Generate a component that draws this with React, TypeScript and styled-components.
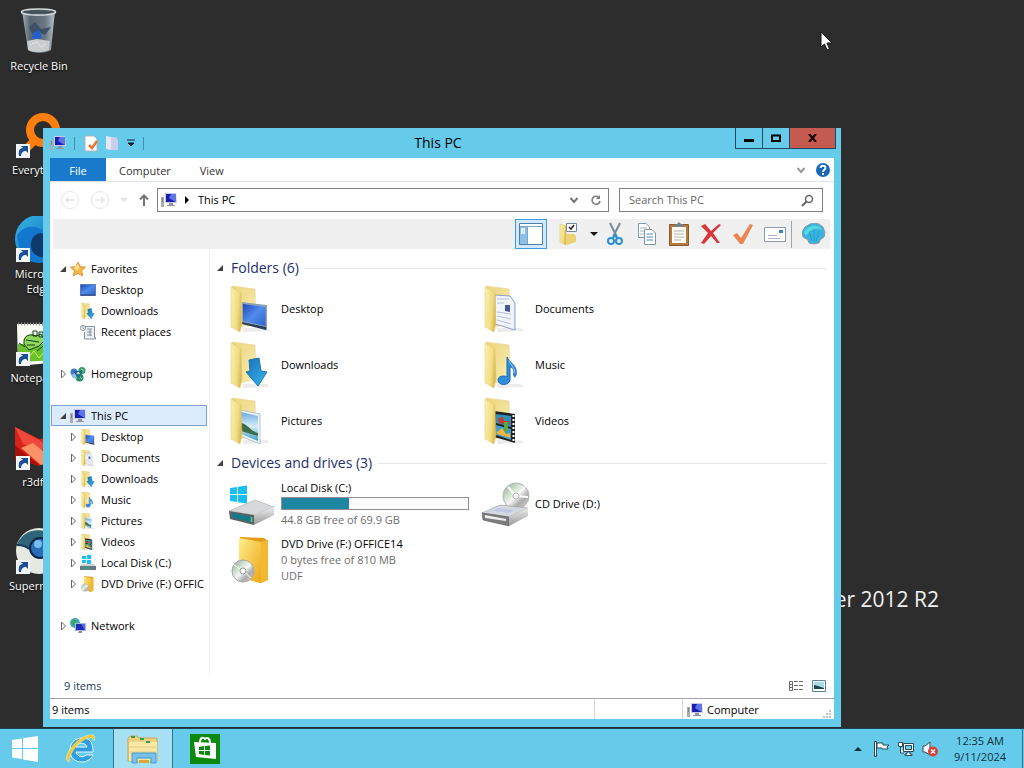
import React from 'react';
import styled, { createGlobalStyle } from 'styled-components';

const GlobalStyle = createGlobalStyle`
  * { box-sizing: border-box; }
  body { margin: 0; background: #2d2d2d; }
  body, button, input {
    font-family: "Open Sans", "Noto Sans", sans-serif;
    font-size: 11px;
    line-height: 16px;
    color: #000;
  }
  button { border: 0; padding: 0; background: none; }
  svg { display: block; flex: none; }
`;

/* ---------- desktop ---------- */

const Screen = styled.div`
  display: flex;
  flex-direction: column;
  height: 100vh;
  overflow: hidden;
`;

const Desktop = styled.main`
  position: relative;
  flex: 1;
  min-height: 0;
  background: #2d2d2d;
`;

const Shortcuts = styled.div`
  display: grid;
  grid-auto-rows: 104px;
  width: 78px;
  padding-top: 8px;
`;

const Shortcut = styled.button`
  display: flex;
  flex-direction: column;
  align-items: center;
  gap: 2px;
  padding: 0 8px;
  color: #fff;
  line-height: 15px;
  text-shadow: 0 1px 2px #000;
`;

const Brand = styled.p`
  position: absolute;
  right: 85px;
  bottom: 114px;
  margin: 0;
  font-size: 21px;
  line-height: 30px;
  color: #f0f0f0;
`;

const Pointer = styled.div`
  position: absolute;
  left: 820px;
  top: 31px;
`;

/* ---------- explorer window ---------- */

const Window = styled.section`
  position: absolute;
  inset: 128px 183px 1px 43px;
  display: flex;
  flex-direction: column;
  padding: 0 7px 8px;
  background: #66cbea;
`;

const TitleBar = styled.header`
  display: grid;
  grid-template-columns: 1fr auto 1fr;
  height: 30px;
`;

const QuickAccess = styled.div`
  display: flex;
  align-items: center;
  gap: 8px;
`;

const QuickDivider = styled.span`
  width: 1px;
  height: 13px;
  background: #3f8fb0;
`;

const Title = styled.h1`
  margin: 0;
  padding-right: 8px;
  font-size: 14px;
  line-height: 30px;
  font-weight: 400;
`;

const Controls = styled.div`
  display: flex;
  justify-content: flex-end;
  margin-right: -2px;
`;

const Control = styled.button<{ $close?: boolean }>`
  display: grid;
  place-items: center;
  width: ${p => (p.$close ? 47 : 28)}px;
  height: 21px;
  border: 1px solid #1c4a60;
  border-top: 0;
  margin-left: -1px;
  background: ${p => (p.$close ? '#c45a50' : 'transparent')};
`;

const Frame = styled.div`
  flex: 1;
  min-height: 0;
  display: flex;
  flex-direction: column;
  background: #fff;
`;

const Tabs = styled.nav`
  display: flex;
  align-items: center;
  height: 24px;
  border-bottom: 1px solid #dfe3e6;
`;

const Tab = styled.button<{ $file?: boolean }>`
  align-self: stretch;
  min-width: 56px;
  padding: 2px 13px 0;
  background: ${p => (p.$file ? '#1979ca' : 'transparent')};
  color: ${p => (p.$file ? '#fff' : '#333')};
`;

const Spacer = styled.span`
  flex: 1;
`;

const IconButton = styled.button<{ $w?: number }>`
  display: grid;
  place-items: center;
  width: ${p => p.$w ?? 22}px;
  height: 22px;
`;

const NavBar = styled.div`
  display: flex;
  align-items: center;
  height: 37px;
  padding: 0 11px 1px 8px;
`;

const Address = styled.div`
  display: flex;
  align-items: center;
  flex: 1;
  height: 24px;
  padding: 0 1px 0 3px;
  border: 1px solid #7d8286;
`;

const Crumb = styled.button`
  padding: 0 8px;
`;

const Search = styled.label`
  display: flex;
  align-items: center;
  width: 204px;
  height: 24px;
  margin-left: 10px;
  padding: 0 8px 0 9px;
  border: 1px solid #7d8286;
`;

const SearchInput = styled.input`
  flex: 1;
  min-width: 0;
  padding: 0;
  border: 0;
  outline: 0;
  background: none;
  &::placeholder { color: #666; opacity: 1; }
`;

const ToolBar = styled.div`
  display: flex;
  align-items: center;
  justify-content: flex-end;
  height: 30px;
  margin: 0 4px 0 3px;
  background: #f0f0f0;
`;

const Tool = styled.button<{ $w?: number; $on?: boolean }>`
  display: grid;
  place-items: center;
  width: ${p => p.$w ?? 32}px;
  height: 30px;
  border: 1px solid ${p => (p.$on ? '#3d9be0' : 'transparent')};
  background: ${p => (p.$on ? '#d3e8f8' : 'transparent')};
`;

const ToolDivider = styled.span`
  width: 1px;
  height: 27px;
  margin-right: 6px;
  background: #a5a5a5;
`;

const Body = styled.div`
  display: flex;
  flex: 1;
  min-height: 0;
`;

const Tree = styled.nav`
  flex: none;
  width: 160px;
  padding: 9px 2px 0 1px;
  border-right: 1px solid #f3f3f3;
`;

const TreeGroup = styled.div`
  display: flex;
  flex-direction: column;
  margin-bottom: 21px;
`;

const TreeItem = styled.button<{ $nested?: boolean; $on?: boolean }>`
  display: flex;
  align-items: center;
  height: 21px;
  padding-left: ${p => (p.$nested ? 18 : 8)}px;
  border: solid ${p => (p.$on ? '#7da2ce' : 'transparent')};
  border-width: 1px ${p => (p.$on ? 1 : 0)}px 1px 1px;
  background: ${p => (p.$on ? '#dcebfc' : 'transparent')};
  white-space: nowrap;
`;

const TreeArrow = styled.span`
  flex: none;
  width: 10px;
`;

const TreeLabel = styled.span`
  margin-left: 5px;
`;

const Content = styled.div`
  flex: 1;
  min-width: 0;
  padding: 9px 7px 0;
`;

const Group = styled.section`
  margin-bottom: 4px;
`;

const GroupHead = styled.h2`
  display: flex;
  align-items: center;
  gap: 6px;
  height: 20px;
  margin: 0 0 3px;
  font-size: 14px;
  line-height: 20px;
  font-weight: 400;
  color: #1e2f6b;
  &::after {
    content: '';
    flex: 1;
    height: 1px;
    background: #e4e6ea;
  }
`;

const Items = styled.div`
  display: grid;
  grid-template-columns: repeat(auto-fill, 254px);
  grid-auto-rows: 56px;
  padding-left: 11px;
`;

const Item = styled.button`
  display: flex;
  align-items: center;
  gap: 5px;
  text-align: left;
`;

const ItemText = styled.span`
  display: flex;
  flex-direction: column;
  width: 188px;
`;

const Note = styled.span`
  color: #6d6d6d;
`;

const Usage = styled.span`
  height: 13px;
  margin: 1px 0 2px;
  border: 1px solid #8f8f8f;
  background: #fbfbfb;
`;

const UsageFill = styled.span`
  display: block;
  height: 100%;
  background: #1d87a3;
`;

const Details = styled.div`
  display: flex;
  align-items: center;
  gap: 8px;
  height: 23px;
  padding: 0 8px 2px 14px;
  color: #1e395b;
`;

const StatusBar = styled.footer`
  display: flex;
  align-items: stretch;
  height: 21px;
  border-top: 1px solid #a5a5a5;
`;

const StatusCell = styled.div<{ $w?: number }>`
  display: flex;
  align-items: center;
  gap: 4px;
  flex: ${p => (p.$w ? 'none' : '1')};
  width: ${p => (p.$w ? p.$w + 'px' : 'auto')};
  padding: 2px 2px 0;
  & + & { border-left: 1px solid #d5d5d5; padding-left: 4px; }
`;

/* ---------- task bar ---------- */

const TaskBar = styled.footer`
  display: flex;
  flex: none;
  height: 40px;
  border-top: 1px solid #17465a;
  background: #66cbea;
`;

const TaskButton = styled.button<{ $w?: number; $on?: boolean }>`
  display: grid;
  place-items: center;
  width: ${p => p.$w ?? 60}px;
  margin-right: 2px;
  border: solid #2d7693;
  border-width: 0 ${p => (p.$on ? 1 : 0)}px;
  background: ${p => (p.$on ? '#a6e0f2' : 'transparent')};
`;

const Tray = styled.div`
  display: flex;
  align-items: center;
`;

const TrayButton = styled.button`
  display: grid;
  place-items: center;
  width: 24px;
  height: 32px;
`;

const Clock = styled.button`
  width: 76px;
  margin-right: 4px;
  color: #0b2f40;
  text-align: center;
`;

const ShowDesktop = styled.button`
  align-self: stretch;
  width: 2px;
  border-left: 1px solid #2d7693;
`;

/* ---------- drawings ---------- */

const SharedPaints = () => (
  <svg width="0" height="0" style={{ position: 'absolute' }} aria-hidden="true">
    <defs>
      <linearGradient id="flap" x1="0" y1="0" x2="1" y2="0.3">
        <stop offset="0" stopColor="#fbf1ae" />
        <stop offset="0.7" stopColor="#f0dc84" />
        <stop offset="1" stopColor="#dcbc55" />
      </linearGradient>
      <linearGradient id="folderBack" x1="0" y1="0" x2="1" y2="1">
        <stop offset="0" stopColor="#ecd47c" />
        <stop offset="1" stopColor="#f9eeb4" />
      </linearGradient>
      <linearGradient id="screen" x1="0" y1="0" x2="1" y2="1">
        <stop offset="0" stopColor="#2448b8" />
        <stop offset="0.5" stopColor="#4f8cec" />
        <stop offset="1" stopColor="#2f62cc" />
      </linearGradient>
      <linearGradient id="arrowBlue" x1="0" y1="0" x2="1" y2="1">
        <stop offset="0" stopColor="#1670b8" />
        <stop offset="1" stopColor="#3cb4ee" />
      </linearGradient>
      <linearGradient id="metal" x1="0" y1="0" x2="0" y2="1">
        <stop offset="0" stopColor="#ededed" />
        <stop offset="1" stopColor="#999" />
      </linearGradient>
      <linearGradient id="disc" x1="0" y1="0" x2="1" y2="1">
        <stop offset="0" stopColor="#9a9a9a" />
        <stop offset="0.3" stopColor="#c6dcc6" />
        <stop offset="0.5" stopColor="#f6f6f6" />
        <stop offset="0.7" stopColor="#adadad" />
        <stop offset="1" stopColor="#d8d8d8" />
      </linearGradient>
      <linearGradient id="gold" x1="0" y1="0" x2="1" y2="1">
        <stop offset="0" stopColor="#fdee8c" />
        <stop offset="1" stopColor="#eda716" />
      </linearGradient>
      <linearGradient id="edge" x1="0" y1="0" x2="1" y2="1">
        <stop offset="0" stopColor="#37b6e4" />
        <stop offset="1" stopColor="#0b5bb5" />
      </linearGradient>
      <linearGradient id="bin" x1="0" y1="0" x2="1" y2="0">
        <stop offset="0" stopColor="#a4b0b8" />
        <stop offset="0.25" stopColor="#566570" />
        <stop offset="0.7" stopColor="#6a7884" />
        <stop offset="1" stopColor="#b7c0c6" />
      </linearGradient>
      <linearGradient id="sky" x1="0" y1="0" x2="0" y2="1">
        <stop offset="0" stopColor="#6ba9e0" />
        <stop offset="0.5" stopColor="#d9eef7" />
        <stop offset="1" stopColor="#3a9bc2" />
      </linearGradient>
    </defs>
  </svg>
);

type FolderKind = 'desktop' | 'documents' | 'downloads' | 'music' | 'pictures' | 'videos';

const overlays: Record<FolderKind, React.ReactNode> = {
  desktop: (
    <>
      <path d="M14 17L39 20V45L14 38Z" fill="#8fa0b6" />
      <path d="M15 19L37.500 22V41L15 36Z" fill="url(#screen)" />
      <path d="M14 37L38 42V45L14 39Z" fill="#2b3c56" />
    </>
  ),
  documents: (
    <>
      <path d="M13 10L28 11 33 18V45L13 39Z" fill="#f1f4fb" stroke="#8f9fc6" />
      <path d="M15 14H27M15 18H22M15 27L29 29M15 31L29 34M15 35L29 39" stroke="#b4bfdc" />
      <path d="M23 20H28V27L23 26Z" fill="#44598f" />
    </>
  ),
  downloads: <path d="M21 19L31 17 33 30 39 31 30 45 18 31 22 30Z" fill="url(#arrowBlue)" stroke="#1f74ae" />,
  music: (
    <>
      <path d="M25 16C27 22 36 24 34 34C33 38 31 35 32 31C32 27 29 26 28 26V39C27 45 16 45 16 39C16 35 22 34 25 36Z" fill="#2f8fdc" stroke="#1b69b4" />
      <path d="M27 19C28 24 33 26 33 32" stroke="#8acbf4" fill="none" />
    </>
  ),
  pictures: (
    <>
      <path d="M12 13L32 17V47L12 39Z" fill="#edf3f7" stroke="#b6c4cc" />
      <path d="M13 15L30 19V44L13 37Z" fill="url(#sky)" />
      <path d="M13 26C20 27 22 34 30 36V39L13 34Z" fill="#3d6c4a" />
    </>
  ),
  videos: (
    <>
      <path d="M12 14L33 17V46L12 40Z" fill="#222" />
      <path d="M14 17L29 19V30L14 26Z" fill="#2f8fb8" />
      <path d="M14 28L29 32V43L14 38Z" fill="#3c9ccf" />
      <path d="M16 21L21 20 22 24 28 24 26 28 17 26Z" fill="#c23c30" />
      <path d="M15 35L20 31 24 37 28 36V41L15 37Z" fill="#f0b43a" />
      <path d="M22 25H26V34H22Z" fill="#5ea63d" />
      <path d="M31.500 18V45" stroke="#fff" strokeWidth="2" strokeDasharray="2 2" />
    </>
  ),
};

const FolderIcon = ({ kind, size = 48 }: { kind: FolderKind; size?: number }) => (
  <svg width={size} height={size} viewBox={size < 20 ? '1 2 41 44' : '0 0 48 48'}>
    <path d="M14 43L39 43 42 46 16 47Z" fill="#ececec" />
    <path d="M4 1L27 4 28 38 12 42Z" fill="url(#folderBack)" stroke="#e5cf86" strokeWidth="0.500" />
    {overlays[kind]}
    <path d="M3 2L13 8 14 38 12 47 3 42Z" fill="url(#flap)" stroke="#e0c66c" strokeWidth="0.500" />
  </svg>
);

const PcIcon = ({ size = 16 }: { size?: number }) => (
  <svg width={size} height={size} viewBox="0 0 16 16">
    <path d="M0 5H3V15H0Z" fill="#a9adac" />
    <path d="M1 7H2M1 9H2" stroke="#557" />
    <path d="M4 1L15 1 16 11 4 11Z" fill="#c3cbe6" />
    <path d="M5 2H14.500V10H5Z" fill="#1a1fae" />
    <path d="M10 2H14.500V10L8 6Z" fill="#5c74e6" />
    <path d="M8 11H12V13H14V14H6V13H8Z" fill="#8f959d" />
  </svg>
);

const DiskIcon = ({ size = 48 }: { size?: number }) =>
  size < 20 ? (
    <svg width={size} height={size} viewBox="0 0 16 16">
      <path d="M2 1H6V4H2ZM7 0H11V4H7ZM2 5H6V8H2ZM7 5H11V9H7Z" fill="#18bff0" />
      <path d="M2 9H14L16 11H0Z" fill="#cfd3d5" />
      <path d="M0 11H16V15H0Z" fill="#67777c" />
      <path d="M2 13H10" stroke="#25b3a8" />
    </svg>
  ) : (
    <svg width={size} height={size} viewBox="0 0 48 48">
      <path d="M2 8L9 7V14H2ZM10 6.800L19 5.500V14H10ZM2 15H9V22L2 21ZM10 15H19V23.500L10 22.300Z" fill="#18bff0" />
      <path d="M1 31L27 20 46 27 26 35Z" fill="#d6d8d9" stroke="#9ea1a3" strokeWidth="0.500" />
      <path d="M1 31L26 35V45L2 39Z" fill="#5c6264" />
      <path d="M4 33L22 36.500V42L4 37.500Z" fill="#127b88" />
      <path d="M26 35L46 27V35L26 45Z" fill="url(#metal)" />
      <path d="M23.500 37V42" stroke="#2fe0a0" strokeWidth="1.500" />
    </svg>
  );

const CdDriveIcon = () => (
  <svg width="48" height="48" viewBox="0 0 48 48">
    <circle cx="34" cy="16" r="13" fill="url(#disc)" stroke="#b4b4b4" />
    <path d="M34 16L43 7M34 16L46 17M34 16L26 7" stroke="#fff" strokeWidth="2" />
    <circle cx="34" cy="16" r="3" fill="#f6f6f6" stroke="#b9b9b9" />
    <path d="M0 33L18 25 46 28 27 37Z" fill="#d6d8e0" stroke="#8f8f8f" strokeWidth="0.500" />
    <path d="M16 28L32 30 27 33 11 31Z" fill="#c0cae4" />
    <path d="M0 33L27 37V46L1 40Z" fill="#7c7c7c" stroke="#4c4c4c" strokeWidth="0.500" />
    <path d="M3 35L24 39V41L3 38Z" fill="#eee" />
    <path d="M27 37L46 28V36L27 46Z" fill="url(#metal)" />
  </svg>
);

const DvdIcon = ({ size = 48 }: { size?: number }) => (
  <svg width={size} height={size} viewBox="0 0 48 48">
    <path d="M12 1L36 2 40 5V44L33 47 12 41Z" fill="#e29d18" />
    <path d="M11 2L33 6V47L11 42Z" fill="url(#gold)" />
    <path d="M33 6L40 4V43L33 47Z" fill="#f2b832" />
    <circle cx="15" cy="35" r="11" fill="url(#disc)" stroke="#a8a8a8" />
    <path d="M15 35L6 29M15 35L23 42M15 35L23 29" stroke="#fff" />
    <circle cx="15" cy="35" r="3" fill="#fff" stroke="#999" />
  </svg>
);

const StarIcon = () => (
  <svg width="16" height="16" viewBox="0 0 16 16">
    <path d="M8 1L10.200 5.600 15.500 6.200 11.600 9.700 12.800 15 8 12.300 3.200 15 4.400 9.700 0.500 6.200 5.800 5.600Z" fill="#fbb744" stroke="#d9822b" strokeWidth="0.800" />
    <path d="M8 3L9.300 6.600 8 10 4 7Z" fill="#fde28f" />
  </svg>
);

const ScreenIcon = () => (
  <svg width="16" height="16" viewBox="0 0 16 16">
    <path d="M0 2H16V14H0Z" fill="#5a7eb8" />
    <path d="M1 3H15V12H1Z" fill="url(#screen)" />
    <path d="M1 13H15" stroke="#1d3a78" />
  </svg>
);

const RecentIcon = () => (
  <svg width="16" height="16" viewBox="0 0 16 16" fill="none" stroke="#84909c">
    <path d="M4.500 2.500H14.500V13.500H15.500V15H4.500V8" fill="#eef1f4" />
    <circle cx="3" cy="4" r="2.500" fill="#fff" />
    <path d="M3 2.500V4.500H4M7 5H12M7 8H12M7 11H12M10 5V12" />
  </svg>
);

const HomegroupIcon = () => (
  <svg width="16" height="16" viewBox="0 0 16 16">
    <circle cx="4" cy="6" r="3.500" fill="#3f79c8" />
    <circle cx="12" cy="4.500" r="3.500" fill="#36a06e" />
    <circle cx="9.500" cy="11.500" r="4" fill="#2f8c6c" />
    <path d="M1 9L5 7 7 13 3 12Z" fill="#8abde8" />
    <path d="M11 3L14 5M9 10L12 13" stroke="#9be0c4" />
    <path d="M4 6L12 5 9 11Z" fill="none" stroke="#204f80" />
  </svg>
);

const NetworkIcon = () => (
  <svg width="16" height="16" viewBox="0 0 16 16">
    <circle cx="5" cy="5" r="5" fill="#3fa3d8" />
    <path d="M1 4C3 1 6 1 7 3L5 6 7 8C5 10 2 8 1 4Z" fill="#3faa55" />
    <path d="M5 5H16V13H5Z" fill="#a8b7dd" />
    <path d="M6 6H15V12H6Z" fill="#1f2cb6" />
    <path d="M11 6H15V12Z" fill="#5271df" />
    <path d="M9 13H12V15H8" fill="#8a8f99" />
  </svg>
);

const Twisty = ({ open }: { open?: boolean }) =>
  open ? (
    <svg width="8" height="8" viewBox="0 0 8 8"><path d="M6 1V7H0Z" fill="#404040" /></svg>
  ) : (
    <svg width="8" height="10" viewBox="0 0 8 10"><path d="M1.500 1L5.500 5 1.500 9Z" fill="#fff" stroke="#666" /></svg>
  );

const LinkBadge = () => (
  <>
    <path d="M1 32H15V46H1Z" fill="#f2f6fa" />
    <path d="M4 44C3 38 5 36 8 36L6 34H13V41L11 39C8 39 6 41 6 44Z" fill="#1c4f93" />
  </>
);

const RecycleIcon = () => (
  <svg width="48" height="48" viewBox="0 0 48 48">
    <path d="M7 3L40 3 36 42C30 46 18 46 13 42Z" fill="url(#bin)" />
    <ellipse cx="23.500" cy="4" rx="17" ry="3" fill="#48525a" stroke="#d5dce0" strokeWidth="1.500" />
    <path d="M14 19L20 14 26 21 36 19 30 27 24 24 18 27Z" fill="#3c5168" />
    <path d="M18 25L24 22 27 29 23 32 17 30Z" fill="#2360cf" />
    <path d="M12 33L22 31 35 33 34 42C28 45 18 45 13 42Z" fill="#c9cccd" />
    <path d="M15 37L22 34 26 39 31 36" stroke="#e6e6e6" fill="none" />
  </svg>
);

const EverythingIcon = () => (
  <svg width="48" height="48" viewBox="0 0 48 48">
    <circle cx="28" cy="18" r="13" fill="none" stroke="#ff7e0e" strokeWidth="8" />
    <path d="M20 28L10 38" stroke="#ff7e0e" strokeWidth="8" />
    <LinkBadge />
  </svg>
);

const EdgeIcon = () => (
  <svg width="48" height="48" viewBox="0 0 48 48">
    <circle cx="24" cy="23" r="24" fill="url(#edge)" />
    <path d="M2 20C8 8 22 9 30 16C20 17 14 26 18 36C21 43 28 45 34 44C20 51 4 42 2 20Z" fill="#1277cf" />
    <path d="M16 31C15 22 20 16 30 17C26 24 28 33 38 33C34 46 17 42 16 31Z" fill="#0f3a6c" />
    <LinkBadge />
  </svg>
);

const NotepadIcon = () => (
  <svg width="48" height="48" viewBox="0 0 48 48">
    <path d="M2 4H44V42L3 46Z" fill="#fbfcf5" />
    <path d="M3 24H44V40L3 42Z" fill="#6cc22a" />
    <path d="M3 4H44" stroke="#999" strokeWidth="3" strokeDasharray="1 2" />
    <path d="M9 24C8 16 14 13 21 16L26 14 30 20 24 26 14 30Z" fill="#8ed65c" stroke="#163d10" />
    <path d="M11 20L24 22M12 25L20 25M18 11H22V16H18ZM24 12H28V17H24ZM4 23L10 27M22 31L32 23" stroke="#163d10" fill="none" />
    <path d="M5 40L9 32 13 38 19 31 24 38 31 30" stroke="#c9ee72" fill="none" />
    <LinkBadge />
  </svg>
);

const FoxIcon = () => (
  <svg width="48" height="48" viewBox="0 0 48 48">
    <path d="M0 3L24 15 46 12 40 32 24 42 0 34Z" fill="#d92218" />
    <path d="M0 3L26 17 34 28 8 20Z" fill="#f0483a" />
    <path d="M6 24L18 19 40 37 26 41Z" fill="#ff9169" />
    <path d="M0 21L15 34 26 42 0 36Z" fill="#a80f0d" />
    <LinkBadge />
  </svg>
);

const SupermiumIcon = () => (
  <svg width="48" height="48" viewBox="0 0 48 48">
    <circle cx="24" cy="23" r="23" fill="#e6e9e0" />
    <path d="M2 17C7 3 25 -4 42 10L34 20 24 12 13 21C9 18 5 17 2 17Z" fill="#2d6478" />
    <path d="M2 17C7 17 11 18 14 21" stroke="#163d60" strokeWidth="2" fill="none" />
    <circle cx="25" cy="20" r="10" fill="#2a6cb6" stroke="#0c2746" strokeWidth="2" />
    <circle cx="23" cy="16" r="4" fill="#77bdf0" />
    <LinkBadge />
  </svg>
);

const PointerIcon = () => (
  <svg width="14" height="20" viewBox="0 0 14 20">
    <path d="M1 1V16L4.500 13 7 19 9.500 18 7 12H12Z" fill="#fff" stroke="#111" />
  </svg>
);

const RoundArrow = ({ back }: { back?: boolean }) => (
  <svg width="20" height="20" viewBox="0 0 20 20" fill="none" stroke="#e6e6e6">
    <circle cx="10" cy="10" r="8.500" />
    <path d={back ? 'M15 10H6M9 7L6 10 9 13' : 'M5 10H14M11 7L14 10 11 13'} strokeWidth="1.500" />
  </svg>
);

const Chevron = ({ color = '#777' }: { color?: string }) => (
  <svg width="10" height="8" viewBox="0 0 10 8"><path d="M1.500 2L5 6 8.500 2" fill="none" stroke={color} strokeWidth="2" /></svg>
);

const Caret = ({ color = '#111' }: { color?: string }) => (
  <svg width="8" height="5" viewBox="0 0 8 5"><path d="M0 0H8L4 4Z" fill={color} /></svg>
);

/* ---------- data ---------- */

const shortcuts: [string, React.ReactNode][] = [
  ['Recycle Bin', <RecycleIcon />],
  ['Everything', <EverythingIcon />],
  ['Microsoft Edge', <EdgeIcon />],
  ['Notepad++', <NotepadIcon />],
  ['r3dfox', <FoxIcon />],
  ['Supermium', <SupermiumIcon />],
];

type Node = { label: string; icon: React.ReactNode; leaf?: boolean };
type Branch = Node & { open?: boolean; on?: boolean; children?: Node[] };

const small = (kind: FolderKind) => <FolderIcon kind={kind} size={16} />;

const tree: Branch[] = [
  {
    label: 'Favorites', icon: <StarIcon />, open: true,
    children: [
      { label: 'Desktop', icon: <ScreenIcon />, leaf: true },
      { label: 'Downloads', icon: small('downloads'), leaf: true },
      { label: 'Recent places', icon: <RecentIcon />, leaf: true },
    ],
  },
  { label: 'Homegroup', icon: <HomegroupIcon /> },
  {
    label: 'This PC', icon: <PcIcon />, open: true, on: true,
    children: [
      { label: 'Desktop', icon: small('desktop') },
      { label: 'Documents', icon: small('documents') },
      { label: 'Downloads', icon: small('downloads') },
      { label: 'Music', icon: small('music') },
      { label: 'Pictures', icon: small('pictures') },
      { label: 'Videos', icon: small('videos') },
      { label: 'Local Disk (C:)', icon: <DiskIcon size={16} /> },
      { label: 'DVD Drive (F:) OFFIC', icon: <DvdIcon size={16} /> },
    ],
  },
  { label: 'Network', icon: <NetworkIcon /> },
];

const folders: [string, FolderKind][] = [
  ['Desktop', 'desktop'],
  ['Documents', 'documents'],
  ['Downloads', 'downloads'],
  ['Music', 'music'],
  ['Pictures', 'pictures'],
  ['Videos', 'videos'],
];

const diskUsed = 36;

/* ---------- page ---------- */

const ExplorerToolBar = () => (
  <ToolBar>
    <Tool $on aria-label="Navigation pane">
      <svg width="24" height="22" viewBox="0 0 24 22">
        <path d="M0.500 0.500H23.500V21.500H0.500Z" fill="#fff" stroke="#4a7fae" />
        <path d="M1 3.500H23M8.500 4V21" stroke="#7ea4c6" />
        <path d="M1 4H8V21H1Z" fill="#8cc0e6" />
        <path d="M2 5H6V11H2Z" fill="#d9ecf8" />
      </svg>
    </Tool>
    <Tool $w={42} aria-label="Folder options">
      <svg width="24" height="24" viewBox="0 0 24 24">
        <path d="M4 2L10 4V23L4 20Z" fill="url(#flap)" stroke="#d8bb5a" strokeWidth="0.500" />
        <path d="M10 12H18L20 14V20L10 23Z" fill="#ecd271" />
        <path d="M10.500 1.500H20.500V9.500H10.500Z" fill="#fff" stroke="#78879a" />
        <path d="M13 5L15 7 18 3" fill="none" stroke="#223" strokeWidth="1.500" />
      </svg>
    </Tool>
    <Tool $w={10} aria-label="More folder options"><Caret /></Tool>
    <Tool $w={32} aria-label="Cut">
      <svg width="16" height="24" viewBox="0 0 16 24" fill="none">
        <path d="M3 1L10 15M13 1L6 15" stroke="#7a8a96" strokeWidth="2" />
        <circle cx="4" cy="19" r="3" stroke="#2b8fd4" strokeWidth="2" />
        <circle cx="12" cy="19" r="3" stroke="#2b8fd4" strokeWidth="2" />
        <path d="M6 16L8 13 10 16" stroke="#2b8fd4" strokeWidth="2" />
      </svg>
    </Tool>
    <Tool aria-label="Copy">
      <svg width="20" height="24" viewBox="0 0 20 24" fill="#fff" stroke="#8496aa">
        <path d="M1.500 1.500H9L12.500 5V15.500H1.500Z" />
        <path d="M3 6H10M3 9H8M3 12H8" stroke="#a9b6c4" />
        <path d="M7.500 7.500H15L18.500 11V22.500H7.500Z" />
        <path d="M9.500 12H16M9.500 15H16M9.500 18H16" stroke="#4b8ac6" />
      </svg>
    </Tool>
    <Tool aria-label="Paste">
      <svg width="20" height="24" viewBox="0 0 20 24">
        <path d="M0.500 2.500H19.500V23.500H0.500Z" fill="#b47a3c" stroke="#8a5a28" />
        <path d="M3 5H17V21H3Z" fill="#fbfaf2" />
        <path d="M5 9H15M5 12H15M5 15H15M5 18H12" stroke="#b3b8b8" />
        <path d="M6 2H8L10 0 12 2H14V5H6Z" fill="#78848c" />
      </svg>
    </Tool>
    <Tool aria-label="Delete">
      <svg width="22" height="22" viewBox="0 0 22 22">
        <path d="M1 3L5 1 11 8 19 1 21 2 13 10 20 20 17 20 11 13 4 21 1 20 8 10Z" fill="#d9363a" />
      </svg>
    </Tool>
    <Tool aria-label="Properties">
      <svg width="22" height="22" viewBox="0 0 22 22">
        <path d="M1 12L5 10 9 15 18 1 21 2 11 21 8 21Z" fill="#ee8450" />
      </svg>
    </Tool>
    <Tool aria-label="Send">
      <svg width="22" height="15" viewBox="0 0 22 15">
        <path d="M0.500 0.500H21.500V14.500H0.500Z" fill="#fff" stroke="#8c9bab" />
        <path d="M15 3H19V6H15Z" fill="#3f80cd" />
        <path d="M4 8.500H13M4 11.500H16" stroke="#aab5c1" />
      </svg>
    </Tool>
    <ToolDivider />
    <Tool aria-label="Classic Shell settings">
      <svg width="24" height="22" viewBox="0 0 24 22">
        <path d="M7 20L6 17 1 14 0 9 3 4 8 1 12 0 17 1 21 4 23 9 22 14 18 17 17 20 12 21Z" fill="#38b5df" stroke="#9a97a0" />
        <path d="M12 19V6M10 18L7 8M14 18L17 8" stroke="#2a9bd0" />
        <path d="M2 9C7 1 16 1 21 7C14 4 8 6 4 13Z" fill="#53dce0" />
      </svg>
    </Tool>
  </ToolBar>
);

export default function App() {
  return (
    <Screen>
      <GlobalStyle />
      <SharedPaints />
      <Desktop>
        <Shortcuts>
          {shortcuts.map(([label, icon]) => (
            <Shortcut key={label}>{icon}<span>{label}</span></Shortcut>
          ))}
        </Shortcuts>
        <Brand>Windows Server 2012 R2</Brand>

        <Window aria-label="This PC">
          <TitleBar>
            <QuickAccess>
              <PcIcon />
              <QuickDivider />
              <svg width="15" height="17" viewBox="0 0 15 17">
                <path d="M2 1H11L14 4V16H2Z" fill="#fff" stroke="#a9b4bc" />
                <path d="M6 10L9 13 14 6" stroke="#ea7436" strokeWidth="2.500" fill="none" />
              </svg>
              <svg width="13" height="16" viewBox="0 0 13 16">
                <path d="M0 1L5 2V15L0 14Z" fill="#e5e7f6" />
                <path d="M5 2H10L12 5V15H5Z" fill="#c8cfea" />
              </svg>
              <svg width="8" height="8" viewBox="0 0 8 8"><path d="M0 1H8M1 4H7L4 7Z" fill="#0b1f30" stroke="#0b1f30" /></svg>
              <QuickDivider />
            </QuickAccess>
            <Title>This PC</Title>
            <Controls>
              <Control aria-label="Minimize">
                <svg width="10" height="8" viewBox="0 0 10 8"><path d="M0 5H10V8H0Z" fill="#000" /></svg>
              </Control>
              <Control aria-label="Maximize">
                <svg width="10" height="8" viewBox="0 0 10 8"><path d="M1 1.500H9V7H1Z" fill="none" stroke="#000" strokeWidth="2" /></svg>
              </Control>
              <Control $close aria-label="Close">
                <svg width="9" height="8" viewBox="0 0 9 8"><path d="M1 0L8 8M8 0L1 8" stroke="#1b0604" strokeWidth="2.200" /></svg>
              </Control>
            </Controls>
          </TitleBar>

          <Frame>
            <Tabs>
              <Tab $file>File</Tab>
              <Tab>Computer</Tab>
              <Tab>View</Tab>
              <Spacer />
              <IconButton aria-label="Expand the ribbon"><Chevron color="#999" /></IconButton>
              <IconButton aria-label="Help">
                <svg width="14" height="14" viewBox="0 0 14 14">
                  <circle cx="7" cy="7" r="7" fill="#1769b8" />
                  <path d="M4.500 5C4.500 2 9.500 2 9.500 5C9.500 7 7 6.500 7 9" fill="none" stroke="#fff" strokeWidth="1.800" />
                  <path d="M6 10H8V12H6Z" fill="#fff" />
                </svg>
              </IconButton>
            </Tabs>

            <NavBar>
              <IconButton $w={24} aria-label="Back"><RoundArrow back /></IconButton>
              <IconButton $w={36} aria-label="Forward"><RoundArrow /></IconButton>
              <IconButton $w={12} aria-label="Recent locations"><Caret color="#e2e2e2" /></IconButton>
              <IconButton $w={27} aria-label="Up">
                <svg width="10" height="12" viewBox="0 0 10 12"><path d="M5 12V2M1 5.500L5 1.500 9 5.500" fill="none" stroke="#757575" strokeWidth="2" /></svg>
              </IconButton>
              <Address>
                <PcIcon />
                <svg width="6" height="8" viewBox="0 0 6 8" style={{ marginLeft: 7 }}><path d="M1 0L5 4 1 8Z" fill="#000" /></svg>
                <Crumb>This PC</Crumb>
                <Spacer />
                <IconButton aria-label="Previous locations"><Chevron /></IconButton>
                <IconButton aria-label="Refresh">
                  <svg width="12" height="12" viewBox="0 0 12 12">
                    <path d="M8.500 3A4 4 0 1 0 10 7" fill="none" stroke="#808080" strokeWidth="1.600" />
                    <path d="M10 1V5H6Z" fill="#808080" />
                  </svg>
                </IconButton>
              </Address>
              <Search>
                <SearchInput placeholder="Search This PC" aria-label="Search This PC" />
                <svg width="13" height="13" viewBox="0 0 13 13" fill="none" stroke="#666">
                  <circle cx="8" cy="5" r="3.500" strokeWidth="1.500" />
                  <path d="M5.500 7.500L1 12" strokeWidth="2" />
                </svg>
              </Search>
            </NavBar>

            <ExplorerToolBar />

            <Body>
              <Tree>
                {tree.map(b => (
                  <TreeGroup key={b.label}>
                    <TreeItem $on={b.on}>
                      <TreeArrow><Twisty open={b.open} /></TreeArrow>{b.icon}<TreeLabel>{b.label}</TreeLabel>
                    </TreeItem>
                    {b.children?.map(c => (
                      <TreeItem key={c.label} $nested>
                        <TreeArrow>{!c.leaf && <Twisty />}</TreeArrow>{c.icon}<TreeLabel>{c.label}</TreeLabel>
                      </TreeItem>
                    ))}
                  </TreeGroup>
                ))}
              </Tree>

              <Content>
                <Group>
                  <GroupHead><Twisty open />Folders (6)</GroupHead>
                  <Items>
                    {folders.map(([label, kind]) => (
                      <Item key={label}><FolderIcon kind={kind} /><ItemText>{label}</ItemText></Item>
                    ))}
                  </Items>
                </Group>
                <Group>
                  <GroupHead><Twisty open />Devices and drives (3)</GroupHead>
                  <Items>
                    <Item>
                      <DiskIcon />
                      <ItemText>
                        Local Disk (C:)
                        <Usage><UsageFill style={{ width: `${diskUsed}%` }} /></Usage>
                        <Note>44.8 GB free of 69.9 GB</Note>
                      </ItemText>
                    </Item>
                    <Item><CdDriveIcon /><ItemText>CD Drive (D:)</ItemText></Item>
                    <Item>
                      <DvdIcon />
                      <ItemText>
                        DVD Drive (F:) OFFICE14
                        <Note>0 bytes free of 810 MB</Note>
                        <Note>UDF</Note>
                      </ItemText>
                    </Item>
                  </Items>
                </Group>
              </Content>
            </Body>

            <Details>
              9 items
              <Spacer />
              <button aria-label="Details view">
                <svg width="16" height="12" viewBox="0 0 16 12" stroke="#6a6a6a" fill="none">
                  <path d="M1.500 1.500H4.500V10.500H1.500ZM1.500 4.500H4.500M1.500 7.500H4.500" />
                  <path d="M6 1.500H15M6 5.500H15M6 9.500H15" strokeDasharray="4 1" />
                </svg>
              </button>
              <button aria-label="Large icons view">
                <svg width="14" height="12" viewBox="0 0 14 12">
                  <path d="M0.500 0.500H13.500V11.500H0.500Z" fill="#fff" stroke="#55869e" />
                  <path d="M2 2H12V9H2Z" fill="#a7dbe8" />
                  <path d="M2 5L6 6 12 8V9H2Z" fill="#1e4452" />
                </svg>
              </button>
            </Details>

            <StatusBar>
              <StatusCell>9 items</StatusCell>
              <StatusCell $w={88} />
              <StatusCell $w={152}>
                <PcIcon />
                Computer
                <Spacer />
                <svg width="10" height="10" viewBox="0 0 10 10" style={{ alignSelf: 'flex-end' }}>
                  <path d="M7 1H9V3H7ZM7 4H9V6H7ZM7 7H9V9H7ZM4 4H6V6H4ZM4 7H6V9H4ZM1 7H3V9H1Z" fill="#c3c3c8" />
                </svg>
              </StatusCell>
            </StatusBar>
          </Frame>
        </Window>

        <Pointer><PointerIcon /></Pointer>
      </Desktop>

      <TaskBar>
        <TaskButton $w={49} aria-label="Start">
          <svg width="28" height="26" viewBox="0 0 28 26">
            <path d="M1 4L11 2.500V12H1ZM12 2.300L27 0V12H12ZM1 13H11V23L1 21.500ZM12 13H27V26L12 23.500Z" fill="#fff" />
          </svg>
        </TaskButton>
        <TaskButton aria-label="Internet Explorer">
          <svg width="34" height="32" viewBox="0 0 34 32">
            <path d="M29 19C29 8 25 5 18 5C11 5 6 10 6 17C6 25 11 29 18 29C23 29 27 26 29 22H22C20 25 13 24 12 19ZM12 14C13 9 22 9 23 14Z" fill="#2f9fe0" stroke="#e7f7ff" fillRule="evenodd" />
            <path d="M5 29C-4 27 12 3 26 2C32 1 31 5 30 8C30 5 28 4 24 5C15 8 5 20 5 29Z" fill="#f4c838" stroke="#fdf0b4" strokeWidth="0.500" />
          </svg>
        </TaskButton>
        <TaskButton $on aria-label="File Explorer">
          <svg width="34" height="30" viewBox="0 0 34 30">
            <path d="M2 4L4 2H11L13 4H31V27H2Z" fill="#eed27e" stroke="#c9a656" />
            <path d="M3 8H31V27H3Z" fill="#f9e7a6" />
            <path d="M5 3H9M14 5H18M20 8H24" stroke="#3f9a54" strokeWidth="2" />
            <path d="M3 13H30M3 18H30" stroke="#e6cf84" />
            <path d="M6 29V19H30V29H25V24H11V29Z" fill="#77c2ec" stroke="#479acb" />
            <path d="M13 26H23V29H13Z" fill="#d8a936" />
          </svg>
        </TaskButton>
        <TaskButton aria-label="Store">
          <svg width="30" height="30" viewBox="0 0 30 30">
            <path d="M0 0H30V30H0Z" fill="#0b8a10" />
            <path d="M4 8L26 9V25L6 23Z" fill="#fff" />
            <path d="M10 9C10 3 13 3 15 5C17 3 20 4 20 9" fill="none" stroke="#fff" strokeWidth="2" />
            <path d="M9 13L14 12V16H9ZM15 12L20 11.500V16H15ZM9 17H14V21L9 20ZM15 17H20V21.500L15 21Z" fill="#0b8a10" />
          </svg>
        </TaskButton>
        <Spacer />
        <Tray>
          <TrayButton aria-label="Show hidden icons">
            <svg width="8" height="4" viewBox="0 0 8 4"><path d="M0 4H8L4 0Z" fill="#0b2f40" /></svg>
          </TrayButton>
          <TrayButton aria-label="Action Center">
            <svg width="16" height="16" viewBox="0 0 16 16" stroke="#2a4957" fill="#fff">
              <path d="M0.500 0.500H2.500V15.500H0.500Z" />
              <path d="M3 2H9V4H15L13 6 14 8H8V7H3Z" />
            </svg>
          </TrayButton>
          <TrayButton aria-label="Network">
            <svg width="16" height="16" viewBox="0 0 16 16" stroke="#2a4957" fill="#fff">
              <path d="M5.500 2.500H15.500V10.500H5.500Z" />
              <path d="M7.500 4.500H13.500V8.500H7.500Z" fill="#74cfe8" />
              <path d="M9 11H12V13H14V14.500H7V13H9ZM0.500 1.500H4.500V5.500H0.500ZM2.500 6V12H6" />
            </svg>
          </TrayButton>
          <TrayButton aria-label="Volume muted">
            <svg width="16" height="16" viewBox="0 0 16 16">
              <path d="M1 5H3L8 1V14L3 11H1Z" fill="#fff" stroke="#2a4957" />
              <circle cx="11" cy="10.500" r="5" fill="#e03c36" />
              <path d="M9 8.500L13 12.500M13 8.500L9 12.500" stroke="#fff" strokeWidth="1.500" />
            </svg>
          </TrayButton>
          <Clock>12:35 AM<br />9/11/2024</Clock>
          <ShowDesktop aria-label="Show desktop" />
        </Tray>
      </TaskBar>
    </Screen>
  );
}
